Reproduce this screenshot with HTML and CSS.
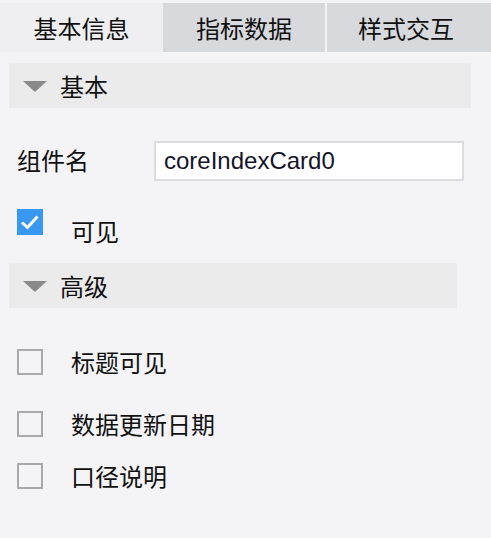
FILE: index.html
```html
<!DOCTYPE html>
<html lang="zh">
<head>
<meta charset="utf-8">
<link rel="stylesheet" href="styles.css">
</head>
<body>
<div class="tabs">
  <div class="tab tab-active">基本信息</div>
  <div class="tab tab-2">指标数据</div>
  <div class="tab tab-3">样式交互</div>
</div>

<div class="section-head head-basic"><span class="tri"></span><span class="head-text">基本</span></div>

<div class="field-row">
  <label class="field-label">组件名</label>
  <div class="input">coreIndexCard0</div>
</div>

<div class="check-row row-visible">
  <span class="checkbox checked"><svg viewBox="0 0 26 26" width="26" height="26"><polyline points="5,13.5 10.5,18.5 20.5,7.5" fill="none" stroke="#fff" stroke-width="3"/></svg></span>
  <span class="check-text text-low">可见</span>
</div>

<div class="section-head head-adv"><span class="tri"></span><span class="head-text">高级</span></div>

<div class="check-row row-a">
  <span class="checkbox"></span>
  <span class="check-text">标题可见</span>
</div>
<div class="check-row row-b">
  <span class="checkbox"></span>
  <span class="check-text">数据更新日期</span>
</div>
<div class="check-row row-c">
  <span class="checkbox"></span>
  <span class="check-text">口径说明</span>
</div>
</body>
</html>
```

FILE: styles.css
```css
html, body {
  margin: 0;
  padding: 0;
}
body {
  background: #f4f4f6;
  width: 491px;
  height: 538px;
  font-family: "Noto Sans CJK SC", "Noto Sans", sans-serif;
  color: #111;
  font-size: 24px;
  overflow: hidden;
}
.tabs {
  display: flex;
  padding-top: 3px;
  height: 49px;
}
.tab {
  height: 49px;
  display: flex;
  align-items: center;
  justify-content: center;
  line-height: 1;
  background: #d8d9dc;
}
.tab-active {
  width: 163px;
  background: #efeff1;
}
.tab-2 {
  width: 162px;
}
.tab-3 {
  width: 164px;
  margin-left: 2px;
  padding-right: 6px;
  box-sizing: border-box;
}
.section-head {
  display: flex;
  align-items: center;
  height: 45px;
  margin-left: 9px;
  background: #ebebeb;
  padding-left: 14px;
  box-sizing: border-box;
}
.head-basic {
  width: 462px;
  margin-top: 11px;
}
.head-adv {
  width: 448px;
  margin-top: 28px;
}
.tri {
  width: 0;
  height: 0;
  border-left: 12px solid transparent;
  border-right: 12px solid transparent;
  border-top: 11px solid #8a8a8a;
  margin-top: 2px;
}
.head-text {
  margin-left: 13px;
  line-height: 1;
  margin-top: 1px;
}
.field-row {
  display: flex;
  align-items: center;
  margin-top: 33px;
  height: 40px;
}
.field-label {
  width: 137px;
  padding-left: 17px;
  line-height: 1;
  margin-top: -2px;
}
.input {
  width: 310px;
  height: 40px;
  box-sizing: border-box;
  border: 2px solid #dcdcdc;
  background: #fff;
  font-family: "Liberation Sans", Arial, sans-serif;
  font-size: 24px;
  color: #14142a;
  padding-left: 8px;
  display: flex;
  align-items: center;
  line-height: 1;
}
.check-row {
  display: flex;
  align-items: center;
  height: 26px;
  padding-left: 17px;
}
.checkbox {
  width: 26px;
  height: 26px;
  box-sizing: border-box;
  border: 2px solid #a9a9a9;
  flex: none;
}
.checkbox.checked {
  border: none;
  background: #3897f0;
}
.checkbox svg {
  display: block;
}
.check-text {
  margin-left: 28px;
  line-height: 1;
}
.text-low {
  margin-top: 17px;
}
.row-visible {
  margin-top: 28px;
}
.row-a {
  margin-top: 41px;
}
.row-b {
  margin-top: 36px;
}
.row-c {
  margin-top: 26px;
}
```
